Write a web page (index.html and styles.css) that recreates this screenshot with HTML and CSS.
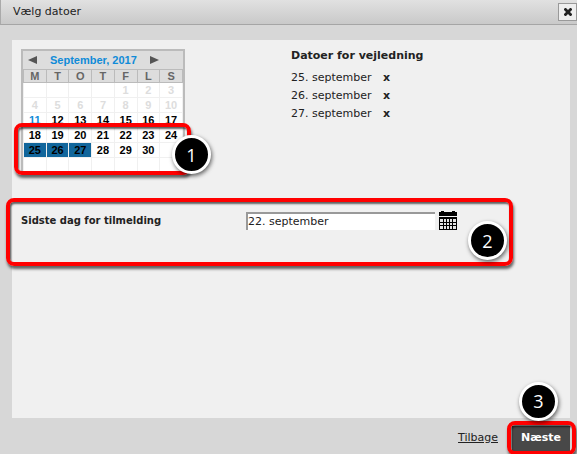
FILE: index.html
```
<!DOCTYPE html>
<html lang="da">
<head>
  <meta charset="UTF-8">
  <meta name="viewport" content="width=device-width, initial-scale=1.0">
  <title>Vælg datoer</title>
  <link rel="stylesheet" href="styles.css">
</head>
<body>
  <div class="dialog">
    <div class="dialog-header">
      <h1 class="title">Vælg datoer</h1>
      <button class="close" type="button" aria-label="Luk">
        <svg width="10" height="10" viewBox="0 0 10 10"><path d="M1 2L2 1H3L5 3L7 1H8L9 2V3L7 5L9 7V8L8 9H7L5 7L3 9H2L1 8V7L3 5L1 3Z" fill="#222"/></svg>
      </button>
    </div>

    <div class="panel">
      <div class="dates">
        <div class="calendar">
          <div class="calendar-nav">
            <button type="button" aria-label="Forrige måned">
              <svg width="9" height="8" viewBox="0 0 9 8"><path d="M9 0V8L0 4Z" fill="#555"/></svg>
            </button>
            <a href="#" class="month">September, 2017</a>
            <button type="button" aria-label="Næste måned">
              <svg width="9" height="8" viewBox="0 0 9 8"><path d="M0 0V8L9 4Z" fill="#555"/></svg>
            </button>
          </div>
          <table class="days">
            <thead>
              <tr><th>M</th><th>T</th><th>O</th><th>T</th><th>F</th><th>L</th><th>S</th></tr>
            </thead>
            <tbody>
              <tr class="past"><td></td><td></td><td></td><td></td><td>1</td><td>2</td><td>3</td></tr>
              <tr class="past"><td>4</td><td>5</td><td>6</td><td>7</td><td>8</td><td>9</td><td>10</td></tr>
              <tr><td class="today">11</td><td>12</td><td>13</td><td>14</td><td>15</td><td>16</td><td>17</td></tr>
              <tr><td>18</td><td>19</td><td>20</td><td>21</td><td>22</td><td>23</td><td>24</td></tr>
              <tr><td class="selected">25</td><td class="selected">26</td><td class="selected">27</td><td>28</td><td>29</td><td>30</td><td></td></tr>
              <tr><td></td><td></td><td></td><td></td><td></td><td></td><td></td></tr>
            </tbody>
          </table>
          <div class="mark mark-weeks"><span class="step">1</span></div>
        </div>

        <div class="chosen">
          <h2>Datoer for vejledning</h2>
          <ul>
            <li>25. september <button type="button" aria-label="Fjern 25. september">x</button></li>
            <li>26. september <button type="button" aria-label="Fjern 26. september">x</button></li>
            <li>27. september <button type="button" aria-label="Fjern 27. september">x</button></li>
          </ul>
        </div>
      </div>

      <div class="deadline">
        <label for="deadline">Sidste dag for tilmelding</label>
        <div class="field">
          <input type="text" id="deadline" value="22. september">
          <button type="button" aria-label="Vælg dato">
            <svg width="18" height="19" viewBox="0 0 18 19">
              <path d="M0 1H2V0H5V1H13V0H16V1H18V5H0Z" fill="#000"/>
              <path d="M0 6H18V19H0Z" fill="#000"/>
              <path d="M1 8h3v3h-3zM5 8h2v3h-2zM8 8h2v3h-2zM11 8h2v3h-2zM14 8h3v3h-3zM1 12h3v2h-3zM5 12h2v2h-2zM8 12h2v2h-2zM11 12h2v2h-2zM14 12h3v2h-3zM1 15h3v3h-3zM5 15h2v3h-2zM8 15h2v3h-2zM11 15h2v3h-2zM14 15h3v3h-3z" fill="#e4e4e4"/>
            </svg>
          </button>
        </div>
        <div class="mark mark-deadline"><span class="step">2</span></div>
      </div>
    </div>

    <div class="dialog-footer">
      <a href="#" class="back">Tilbage</a>
      <div class="next">
        <button type="button">Næste</button>
        <div class="mark mark-next"><span class="step">3</span></div>
      </div>
    </div>
  </div>
</body>
</html>
```
FILE: styles.css
```
* {
  box-sizing: border-box;
}
body, h1, h2, ul {
  margin: 0;
  padding: 0;
}
body {
  font-family: "DejaVu Sans", Verdana, sans-serif;
  font-size: 11px;
  line-height: 18px;
  color: #222;
  background-color: #d7d7d7;
}
button {
  padding: 0;
  border: 0;
  background: none;
  font: inherit;
  color: inherit;
  cursor: pointer;
}
svg {
  display: block;
}

.dialog {
  display: flex;
  flex-direction: column;
  min-height: 100vh;
  overflow: hidden;
}
.dialog-header {
  display: flex;
  justify-content: space-between;
  align-items: center;
  height: 25px;
  padding: 0 0 0 12px;
  border-left: 1px solid #aaa;
  border-bottom: 1px solid #a5a5a5;
  background-image: linear-gradient(#e1e1e1, #c9c9c9);
}
.title {
  font-size: 11px;
  font-weight: normal;
}
.close {
  display: flex;
  justify-content: center;
  align-items: center;
  width: 19px;
  height: 18px;
  border: 1px solid #999;
  background-color: #eee;
}

.panel {
  flex: 1;
  margin: 15px 7px 0 12px;
  padding: 9px;
  background-color: #f0f0f0;
}
.dates {
  display: flex;
  gap: 106px;
}

/* calendar */
.calendar {
  position: relative;
  width: 164px;
  border: 2px solid #bbb;
  font-family: "Liberation Sans", Arial, sans-serif;
  font-weight: bold;
  background-color: #fff;
}
.calendar-nav {
  display: flex;
  align-items: center;
  gap: 13px;
  height: 18px;
  padding-left: 5px;
  background-color: #ddd;
}
.month {
  color: #0f8bd8;
  text-decoration: none;
}
.days {
  width: 100%;
  table-layout: fixed;
  border-collapse: collapse;
  line-height: 14px;
}
.days th,
.days td {
  height: 15px;
  padding: 0;
  text-align: center;
  border: 1px solid #f0f0f0;
}
.days th {
  height: 13px;
  line-height: 12px;
  color: #666;
  border-color: #bbb;
  background-color: #ddd;
}
.days td {
  color: #000;
}
.days .past td {
  color: #ddd;
}
.days .today {
  color: #0f8bd8;
}
.days .selected {
  background-color: #11669c;
}

.chosen h2 {
  font-size: 11px;
  margin-top: -2px;
  margin-bottom: 4px;
}
.chosen ul {
  list-style: none;
}
.chosen button {
  margin-left: 8px;
  font-weight: bold;
}

/* deadline */
.deadline {
  position: relative;
  display: flex;
  align-items: center;
  margin-top: 36px;
}
.deadline label {
  width: 225px;
  font-size: 10px;
  font-weight: bold;
}
.field {
  display: flex;
  align-items: center;
  gap: 4px;
}
.field input {
  width: 189px;
  height: 18px;
  padding: 0;
  border: 0;
  border-top: 2px solid #999;
  border-left: 2px solid #999;
  font: inherit;
  color: #222;
  background-color: #fff;
}

.dialog-footer {
  display: flex;
  justify-content: flex-end;
  align-items: center;
  gap: 14px;
  height: 36px;
  padding: 4px 7px 0 0;
}
.back {
  color: #222;
}
.next {
  position: relative;
}
.next button {
  width: 58px;
  height: 25px;
  font-weight: bold;
  color: #fff;
  background-color: #484848;
}

/* numbered highlights */
.mark {
  position: absolute;
  border: 4px solid #f00;
  border-radius: 8px;
  box-shadow: 1px 3px 3px rgba(0, 0, 0, .6), inset 1px 2px 2px rgba(0, 0, 0, .6);
  pointer-events: none;
}
.mark-weeks {
  top: 72px;
  right: -8px;
  bottom: -2px;
  left: -9px;
}
.mark-deadline {
  top: -13px;
  left: -15px;
  width: 507px;
  height: 68px;
}
.mark-next {
  top: -5px;
  right: -6px;
  bottom: -4px;
  left: -5px;
}
.step {
  position: absolute;
  display: flex;
  justify-content: center;
  align-items: center;
  width: 39px;
  height: 39px;
  border: 3px solid #fff;
  border-radius: 50%;
  font-family: "Open Sans", "Segoe UI", sans-serif;
  font-size: 18px;
  font-weight: normal;
  color: #fff;
  background-color: #000;
  box-shadow: 1px 2px 4px rgba(0, 0, 0, .6);
}
.mark-weeks .step {
  top: 8px;
  right: -24px;
}
.mark-deadline .step {
  top: 19px;
  right: 2px;
}
.mark-next .step {
  top: -43px;
  left: 8px;
}
```
